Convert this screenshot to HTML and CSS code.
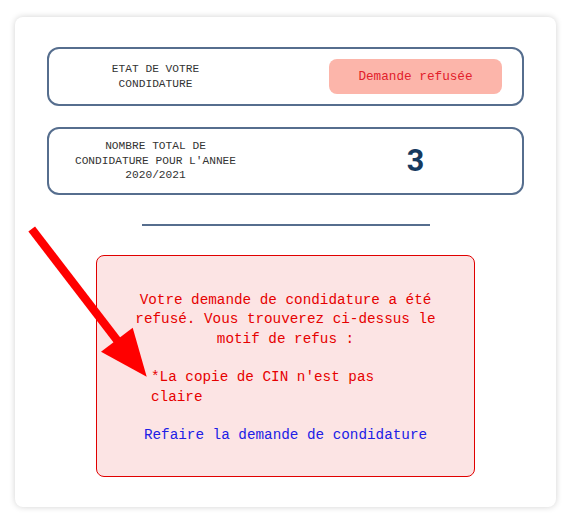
FILE: index.html
```html
<!DOCTYPE html>
<html lang="fr">
<head>
<meta charset="utf-8">
<title>Etat de votre condidature</title>
<link rel="stylesheet" href="styles.css">
</head>
<body>
<main class="card">
  <section class="info-box">
    <div class="label">ETAT DE VOTRE CONDIDATURE</div>
    <div class="value"><span class="badge">Demande refusée</span></div>
  </section>
  <section class="info-box">
    <div class="label">NOMBRE TOTAL DE CONDIDATURE POUR L'ANNEE 2020/2021</div>
    <div class="value"><span class="count">3</span></div>
  </section>
  <hr class="divider">
  <section class="refusal">
    <p class="msg">Votre demande de condidature a été refusé. Vous trouverez ci-dessus le motif de refus :</p>
    <p class="reason">*La copie de CIN n'est pas claire</p>
    <p class="redo"><a href="#" class="redo-link">Refaire la demande de condidature</a></p>
  </section>
</main>
<svg class="arrow" width="573" height="526" viewBox="0 0 573 526" aria-hidden="true">
  <line x1="31.7" y1="229" x2="120" y2="344" stroke="#ff0000" stroke-width="8.4"/>
  <polygon points="101,351.7 132.7,327.7 146.7,376.7" fill="#ff0000"/>
</svg>
</body>
</html>
```

FILE: styles.css
```css
html, body {
  margin: 0;
  background: #ffffff;
}

body {
  position: relative;
  padding: 17px 17px 19px 15px;
  font-family: "Liberation Mono", "DejaVu Sans Mono", monospace;
}

.card {
  background: #ffffff;
  border-radius: 8px;
  box-shadow: 0 0 6px rgba(0, 0, 0, 0.18);
  padding: 30px 32px;
  display: flex;
  flex-direction: column;
}

.info-box {
  border: 2px solid #566e8e;
  border-radius: 12px;
  padding: 10px 0;
  display: grid;
  grid-template-columns: 200px 200px;
  column-gap: 60px;
  justify-content: center;
  align-items: center;
}

.info-box + .info-box {
  margin-top: 21px;
}

.label {
  justify-self: center;
  max-width: 164px;
  text-align: center;
  font-size: 11.2px;
  line-height: 14.7px;
  color: #333333;
}

.value {
  display: flex;
  justify-content: center;
}

.badge {
  display: block;
  width: 173px;
  box-sizing: border-box;
  text-align: center;
  padding: 9px 0;
  background: #fcb5aa;
  border-radius: 8px;
  color: #e2202b;
  font-size: 12.7px;
  line-height: 17px;
}

.count {
  font-family: Roboto, "Liberation Sans", sans-serif;
  font-weight: 700;
  font-size: 30.5px;
  line-height: 36px;
  color: #163a5f;
}

.divider {
  width: 288px;
  height: 2px;
  margin: 29px auto 0;
  border: none;
  background: #566e8e;
}

.refusal {
  width: 379px;
  box-sizing: border-box;
  margin: 29px auto 0;
  padding: 35px 20px 30.6px;
  background: #fce4e4;
  border: 1px solid #e00000;
  border-radius: 8px;
  text-align: center;
  font-size: 14.3px;
  line-height: 19.3px;
  color: #e60000;
}

.refusal p {
  margin: 0;
}

.refusal p + p {
  margin-top: 19.3px;
}

.refusal .reason {
  width: 269px;
  margin-left: auto;
  margin-right: auto;
  text-align: left;
}

.redo-link {
  color: #2020e6;
  text-decoration: none;
}

.arrow {
  position: absolute;
  left: 0;
  top: 0;
  pointer-events: none;
}
```
